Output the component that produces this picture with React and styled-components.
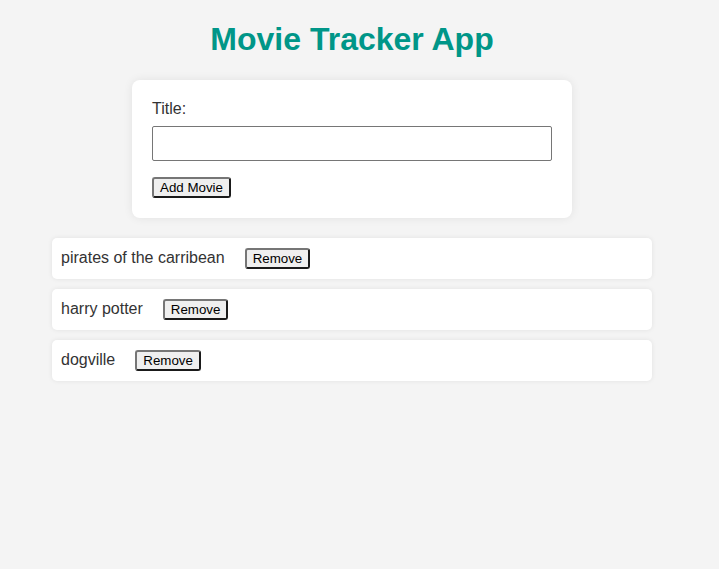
import React, { useState } from 'react';
import styled, { createGlobalStyle } from 'styled-components';

const GlobalStyle = createGlobalStyle`
  body {
    margin: 0 23px 8px 8px;
    background-color: #f4f4f4;
    font-family: "Liberation Sans", Arial, sans-serif;
    color: #333;
  }
`;

const Heading = styled.h1`
  margin: 21.44px 0;
  text-align: center;
  font-size: 32px;
  font-weight: 700;
  color: #009688;
`;

const FormCard = styled.form`
  max-width: 400px;
  margin: 0 auto;
  padding: 20px;
  background-color: #fff;
  border-radius: 8px;
  box-shadow: 0 0 10px rgba(0, 0, 0, 0.08);

  label {
    display: block;
    margin-bottom: 8px;
    font-size: 16px;
    line-height: 18px;
  }

  input {
    display: block;
    box-sizing: border-box;
    width: 100%;
    height: 35px;
    margin-bottom: 16px;
    border: 1px solid #767676;
    border-radius: 2px;
    font-size: 16px;
  }
`;

const Button = styled.button`
  font-family: "Liberation Sans", Arial, sans-serif;
  font-size: 13.33px;
  color: #000;
  padding: 1px 6px;
  background-color: #efefef;
  border: 2px solid;
  border-color: #767676 #1a1a1a #1a1a1a #767676;
  border-radius: 3px;
`;

const MovieList = styled.ul`
  max-width: 600px;
  margin: 20px auto;
  padding: 0;
  list-style: none;
`;

const MovieItem = styled.li`
  display: flex;
  align-items: center;
  margin-bottom: 10px;
  padding: 10px 9px;
  background-color: #fff;
  border-radius: 5px;
  box-shadow: 0 0 5px rgba(0, 0, 0, 0.08);

  .name {
    font-size: 16px;
    margin-right: 20px;
  }
`;

const App = () => {
  const [movies, setMovies] = useState(['pirates of the carribean', 'harry potter', 'dogville']);
  const [title, setTitle] = useState('');

  const addMovie = (e) => {
    e.preventDefault();
    if (!title.trim()) return;
    setMovies([...movies, title.trim()]);
    setTitle('');
  };

  return (
    <>
      <GlobalStyle />
      <Heading>Movie Tracker App</Heading>
      <FormCard onSubmit={addMovie}>
        <label htmlFor="title">Title:</label>
        <input id="title" value={title} onChange={(e) => setTitle(e.target.value)} />
        <Button type="submit">Add Movie</Button>
      </FormCard>
      <MovieList>
        {movies.map((movie, i) => (
          <MovieItem key={i}>
            <span className="name">{movie}</span>
            <Button onClick={() => setMovies(movies.filter((_, j) => j !== i))}>Remove</Button>
          </MovieItem>
        ))}
      </MovieList>
    </>
  );
};

export default App;
